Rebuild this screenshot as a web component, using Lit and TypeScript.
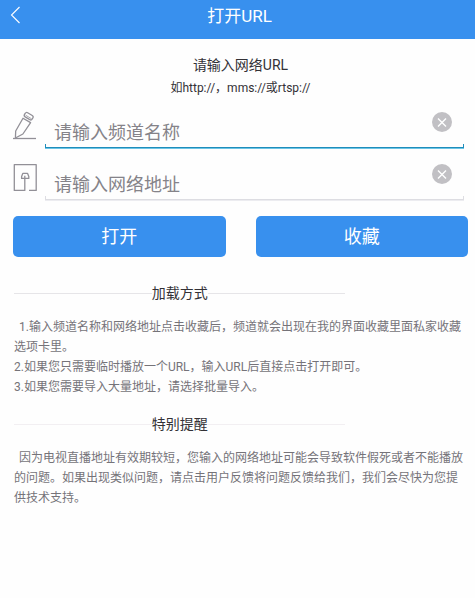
import { LitElement, html, css, svg } from "lit";
import { customElement, property } from "lit/decorators.js";

const pencil = svg`
  <path d="M10 7.2 L17.6 11.6 L9.9 23 L2.4 27 L2.7 20 Z" />
  <rect x="11.2" y="2.8" width="9" height="4.8" rx="1.8" transform="rotate(31 15.7 5.2)" />
  <path d="M12.6 4.2 L18.6 7.8" stroke-width="0.8" />
  <path d="M0 27.5 H23" />
`;

const socket = svg`
  <path d="M11.8 15 V27.4 H1.3 V1.6 H23.2 V27.4 H16" />
  <path d="M8.6 15.4 V13.6 L9.8 10.4 H14.6 L15.8 13.6 V15.4 Z M11.8 12.8 V16" />
`;

@customElement("url-field")
class UrlField extends LitElement {
  @property() label = "";
  @property() icon = "pencil";
  @property({ type: Boolean, reflect: true }) active = false;

  static styles = css`
    :host {
      display: flex;
      height: 52px;
      gap: 8px;
      --line: #dddde2;
      --glow: #ececf0;
    }
    :host([active]) {
      --line: #1f8dbb;
      --glow: #6cc5e6;
    }
    .icon {
      flex: none;
      width: 24px;
      height: 29px;
      margin-top: 14px;
      fill: none;
      stroke: #929097;
      stroke-width: 1.3;
      stroke-linejoin: round;
    }
    .box {
      position: relative;
      flex: 1;
      display: flex;
      align-items: flex-start;
      min-width: 0;
      padding: 0 12px 0 9px;
    }
    .box::after {
      content: "";
      position: absolute;
      inset: auto 0 1px 0;
      height: 3px;
      border: 1px solid var(--line);
      border-top: 0;
      box-shadow: 0 1px 0 var(--glow);
      pointer-events: none;
    }
    input {
      flex: 1;
      min-width: 0;
      height: 28px;
      margin-top: 22px;
      padding: 0;
      border: 0;
      outline: 0;
      background: none;
      color: #333;
      font: 18px/28px Roboto, "Noto Sans CJK SC", sans-serif;
    }
    input::placeholder {
      color: #858389;
      opacity: 1;
    }
    button {
      flex: none;
      width: 20px;
      height: 20px;
      margin-top: 15px;
      padding: 0;
      border: 0;
      border-radius: 50%;
      background: #c1c0c4;
    }
    .cross {
      display: block;
      width: 20px;
      height: 20px;
      fill: none;
      stroke: #fff;
      stroke-width: 1.4;
    }
  `;

  private clear() {
    this.renderRoot.querySelector("input")!.value = "";
  }

  render() {
    return html`
      <svg class="icon" viewBox="0 0 24 29" aria-hidden="true">
        ${this.icon === "pencil" ? pencil : socket}
      </svg>
      <div class="box">
        <input type="text" aria-label=${this.label} placeholder=${this.label} />
        <button type="button" aria-label="清除" @click=${this.clear}>
          <svg class="cross" viewBox="0 0 20 20"><path d="M6 6.5 L14 14.5 M14 6.5 L6 14.5" /></svg>
        </button>
      </div>
    `;
  }
}

@customElement("app-root")
class AppRoot extends LitElement {
  static styles = css`
    :host {
      display: block;
      min-height: 100vh;
      background: #fefefe;
      color: #333136;
      font: 12px/20px Roboto, "Noto Sans CJK SC", sans-serif;
    }
    header {
      display: grid;
      grid-template-columns: 42px 1fr 38px;
      align-items: start;
      height: 39px;
      background: #3890ee;
      color: #fff;
    }
    .back {
      height: 30px;
      padding: 0 0 0 10px;
      border: 0;
      background: none;
    }
    .back svg {
      display: block;
      fill: none;
      stroke: #fff;
      stroke-width: 1.1;
    }
    h1,
    h2,
    h3,
    p {
      margin: 0;
      font-weight: 400;
    }
    h1 {
      font-size: 17px;
      line-height: 32px;
      text-align: center;
    }
    .intro {
      padding: 12px 0 0 6px;
      text-align: center;
    }
    h2 {
      font-size: 14px;
      line-height: 28px;
    }
    .intro p {
      line-height: 18px;
    }
    form {
      display: flex;
      flex-direction: column;
    }
    .fields {
      padding: 0 11px 0 13px;
    }
    .actions {
      display: grid;
      grid-template-columns: 1fr 1fr;
      gap: 30px;
      padding: 15px 7px 24px 13px;
    }
    .actions button {
      height: 41px;
      padding: 0;
      border: 0;
      border-radius: 5px;
      background: #3890ee;
      color: #fff;
      font: inherit;
      font-size: 18px;
    }
    section {
      padding: 0 7px 15px 14px;
    }
    h3 {
      display: flex;
      align-items: center;
      width: 73%;
      font-size: 14px;
      line-height: 24px;
    }
    h3::before,
    h3::after {
      content: "";
      flex: 1;
      height: 1px;
      background: #e6e5e8;
    }
    .faint::before,
    .faint::after {
      background: #f2eff2;
    }
    .text {
      margin-top: 12px;
      color: #757379;
    }
    .lead {
      text-indent: 5px;
    }
  `;

  render() {
    return html`
      <header>
        <button class="back" type="button" aria-label="返回">
          <svg width="12" height="18" viewBox="0 0 12 18"><path d="M9.5 1 L1.5 9 L9.5 17" /></svg>
        </button>
        <h1>打开URL</h1>
      </header>
      <main>
        <div class="intro">
          <h2>请输入网络URL</h2>
          <p>如http://，mms://或rtsp://</p>
        </div>
        <form @submit=${(e: Event) => e.preventDefault()}>
          <div class="fields">
            <url-field active label="请输入频道名称" icon="pencil"></url-field>
            <url-field label="请输入网络地址" icon="socket"></url-field>
          </div>
          <div class="actions">
            <button type="submit">打开</button>
            <button type="button">收藏</button>
          </div>
        </form>
        <section>
          <h3>加载方式</h3>
          <div class="text">
            <p class="lead">1.输入频道名称和网络地址点击收藏后，频道就会出现在我的界面收藏里面私家收藏选项卡里。</p>
            <p>2.如果您只需要临时播放一个URL，输入URL后直接点击打开即可。</p>
            <p>3.如果您需要导入大量地址，请选择批量导入。</p>
          </div>
        </section>
        <section>
          <h3 class="faint">特别提醒</h3>
          <div class="text">
            <p class="lead">因为电视直播地址有效期较短，您输入的网络地址可能会导致软件假死或者不能播放的问题。如果出现类似问题，请点击用户反馈将问题反馈给我们，我们会尽快为您提供技术支持。</p>
          </div>
        </section>
      </main>
    `;
  }
}
